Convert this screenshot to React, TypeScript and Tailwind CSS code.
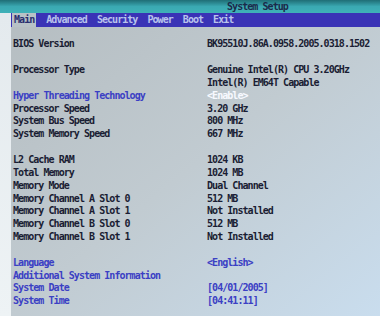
import React from 'react';

type Row = { label?: string; value?: string; blue?: boolean; valueBlue?: boolean; hl?: boolean };

const rows: Row[] = [
    { label: 'BIOS Version', value: 'BK95510J.86A.0958.2005.0318.1502' },
    {},
    { label: 'Processor Type', value: 'Genuine Intel(R) CPU 3.20GHz' },
    { value: 'Intel(R) EM64T Capable' },
    { label: 'Hyper Threading Technology', value: '<Enable>', blue: true, hl: true },
    { label: 'Processor Speed', value: '3.20 GHz' },
    { label: 'System Bus Speed', value: '800 MHz' },
    { label: 'System Memory Speed', value: '667 MHz' },
    {},
    { label: 'L2 Cache RAM', value: '1024 KB' },
    { label: 'Total Memory', value: '1024 MB' },
    { label: 'Memory Mode', value: 'Dual Channel' },
    { label: 'Memory Channel A Slot 0', value: '512 MB' },
    { label: 'Memory Channel A Slot 1', value: 'Not Installed' },
    { label: 'Memory Channel B Slot 0', value: '512 MB' },
    { label: 'Memory Channel B Slot 1', value: 'Not Installed' },
    {},
    { label: 'Language', value: '<English>', blue: true, valueBlue: true },
    { label: 'Additional System Information', blue: true },
    { label: 'System Date', value: '[04/01/2005]', blue: true, valueBlue: true },
    { label: 'System Time', value: '[04:41:11]', blue: true, valueBlue: true },
];

const menu = ['Main', 'Advanced', 'Security', 'Power', 'Boot', 'Exit'];

export default function App() {
    return (
        <div
            className="w-[380px] h-[316px] overflow-hidden flex flex-col bg-[#dde5ea] text-[10px] font-bold tracking-[-0.95px] leading-none"
            style={{ fontFamily: '"DejaVu Sans Mono", "Liberation Mono", monospace' }}>
            {/* Title bar */}
            <div className="h-[13px] shrink-0 bg-gradient-to-b from-[#1f6e76] via-[#3aa9b2] to-[#3fb1b8] flex items-center pl-[227px] text-[#1b2a4a]">
                System Setup
            </div>

            <div className="flex flex-1 min-h-0">
                {/* bezel strip */}
                <div className="w-[11px] shrink-0 bg-gradient-to-b from-[#e4eaee] to-[#eef3f5]" />

                <div className="flex-1 flex flex-col bg-gradient-to-br from-[#b5bdc1] via-[#c1cbd1] to-[#c9ddee]">
                    {/* Menu bar */}
                    <div className="h-[14px] shrink-0 bg-[#3a33b6] flex items-center gap-[10px] pl-[1px] text-[#b9c3ec]">
                        {menu.map((m, i) => (
                            <span
                                key={m}
                                className={
                                    i === 0
                                        ? 'h-full flex items-center px-[2px] bg-[#b8c2c6] text-[#2b2f6e]'
                                        : ''
                                }>
                                {m}
                            </span>
                        ))}
                    </div>

                    {/* Body */}
                    <div className="pt-[11px] pl-[2px] flex flex-col">
                        {rows.map((r, i) => (
                            <div key={i} className="h-[12.85px] flex items-center">
                                <span className={`w-[194px] shrink-0 ${r.blue ? 'text-[#3b40c4]' : 'text-[#1a1d33]'}`}>
                                    {r.label}
                                </span>
                                <span
                                    className={
                                        r.hl
                                            ? 'text-[#f7f9ff]'
                                            : r.valueBlue
                                              ? 'text-[#3b40c4]'
                                              : 'text-[#1a1d33]'
                                    }>
                                    {r.value}
                                </span>
                            </div>
                        ))}
                    </div>
                </div>
            </div>
        </div>
    );
}
